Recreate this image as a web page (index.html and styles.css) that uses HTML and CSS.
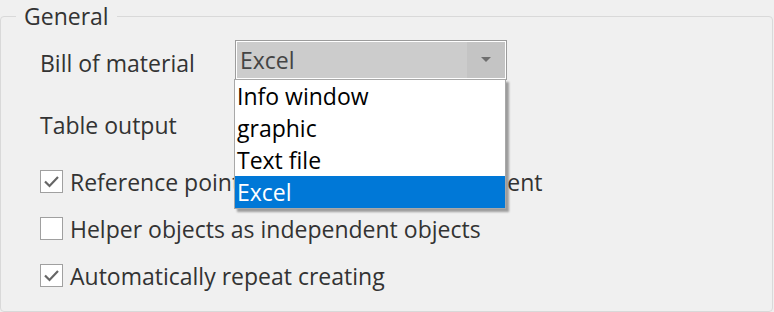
FILE: index.html
```html
<!DOCTYPE html>
<html>
<head>
	<meta charset="utf-8">
	<title>General</title>
	<link rel="stylesheet" href="styles.css">
</head>
<body>

<fieldset class="group">
	<legend>General</legend>

	<div class="form">
		<div class="row field">
			<span class="label">Bill of material</span>
			<div class="combo">
				<span class="combo-value">Excel</span>
				<span class="combo-arrow">
					<svg width="10" height="6" viewBox="0 0 10 6"><path d="M0 0 L10 0 L5 5 Z" fill="#6e6e6e"/></svg>
				</span>
			</div>
		</div>

		<div class="row field">
			<span class="label">Table output</span>
		</div>

		<label class="row check">
			<span class="box on">
				<svg width="17" height="13" viewBox="0 0 17 13"><path d="M2 6.5 L6.5 11 L15 2" fill="none" stroke="#666" stroke-width="2.2"/></svg>
			</span>
			<span>Reference point as independent component</span>
		</label>

		<label class="row check">
			<span class="box"></span>
			<span>Helper objects as independent objects</span>
		</label>

		<label class="row check">
			<span class="box on">
				<svg width="17" height="13" viewBox="0 0 17 13"><path d="M2 6.5 L6.5 11 L15 2" fill="none" stroke="#666" stroke-width="2.2"/></svg>
			</span>
			<span>Automatically repeat creating</span>
		</label>
	</div>

	<!-- open list of the combo box -->
	<ul class="droplist">
		<li>Info window</li>
		<li>graphic</li>
		<li>Text file</li>
		<li class="selected">Excel</li>
	</ul>
</fieldset>

</body>
</html>
```

FILE: styles.css
```css
body {
	margin: 0;
	background-color: #f0f0f0;
	font-family: 'Open Sans', 'Noto Sans', sans-serif;
	font-size: 23px;
	color: #333;
}

.group {
	position: relative;
	box-sizing: border-box;
	width: 773px;
	height: 312px;
	margin: 0;
	padding: 0;
	border: 1px solid #d9d9d9;
	border-radius: 4px;
}
.group legend {
	margin-left: 15px;
	padding: 0 8px;
	line-height: 32px;
}

.form {
	padding: 8px 0 0 39px;
}

.row {
	display: flex;
	align-items: center;
}
.field {
	height: 40px;
}
.field + .field {
	margin-top: 22px;
}
.label {
	width: 195px;
	padding-top: 5px;
}

.combo {
	display: flex;
	box-sizing: border-box;
	width: 272px;
	height: 40px;
	border: 1px solid #9c9c9c;
	background-color: #cccccc;
	box-shadow: inset 0 0 0 1px #fff;
	padding: 1px;
}
.combo-value {
	flex: 1;
	padding-left: 3px;
	line-height: 36px;
	color: #444;
}
.combo-arrow {
	width: 38px;
	display: flex;
	justify-content: center;
	align-items: center;
	background-color: #c4c4c4;
}

.check {
	height: 47px;
	gap: 7px;
}
.field + .check {
	margin-top: 16px;
}
.box {
	box-sizing: border-box;
	width: 23px;
	height: 23px;
	border: 1px solid #a0a0a0;
	background-color: white;
	display: flex;
	justify-content: center;
	align-items: center;
}

.droplist {
	position: absolute;
	left: 233px;
	top: 47px;
	width: 272px;
	margin: 0;
	padding: 0;
	list-style: none;
	box-sizing: border-box;
	border: 1px solid #a8a8a8;
	background-color: white;
	box-shadow: 3px 3px 2px rgba(0,0,0,0.35);
	color: black;
}
.droplist li {
	height: 32px;
	line-height: 32px;
	padding-left: 2px;
}
.droplist .selected {
	background-color: #0078d7;
	color: white;
}
```
